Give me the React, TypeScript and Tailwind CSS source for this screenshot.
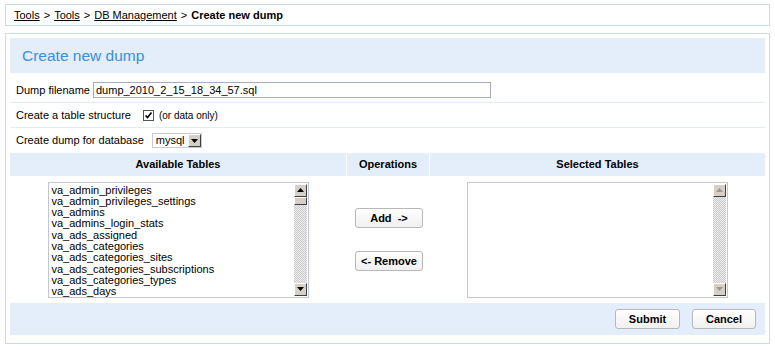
const tables = [
  'va_admin_privileges',
  'va_admin_privileges_settings',
  'va_admins',
  'va_admins_login_stats',
  'va_ads_assigned',
  'va_ads_categories',
  'va_ads_categories_sites',
  'va_ads_categories_subscriptions',
  'va_ads_categories_types',
  'va_ads_days',
];

const Arrow = ({ up, disabled }: { up?: boolean; disabled?: boolean }) => (
  <div className="w-[13px] h-[13px] bg-[#d4d0c8] border border-t-white border-l-white border-r-[#404040] border-b-[#404040] flex items-center justify-center">
    <svg width="7" height="4" viewBox="0 0 7 4">
      <path d={up ? 'M3.5 0 L7 4 L0 4 Z' : 'M0 0 L7 0 L3.5 4 Z'} fill={disabled ? '#9a9a9a' : '#000'} />
    </svg>
  </div>
);

const Scrollbar = ({ thumb }: { thumb?: boolean }) => (
  <div className="w-[13px] h-full flex flex-col">
    <Arrow up disabled={!thumb} />
    <div className="flex-1 flex flex-col bg-[repeating-conic-gradient(#c8c8c8_0_25%,#f0f0f0_0_50%)] bg-[length:2px_2px]">
      {thumb && (
        <div className="w-[13px] h-[8px] bg-[#d4d0c8] border border-t-white border-l-white border-r-[#404040] border-b-[#404040]" />
      )}
    </div>
    <Arrow disabled={!thumb} />
  </div>
);

const Btn = ({ children, className }: { children: React.ReactNode; className: string }) => (
  <button className={`h-[20px] rounded-[3px] border border-[#b8b8b8] bg-gradient-to-b from-white to-[#f0f0f0] text-[11px] font-bold text-black leading-none ${className}`}>
    {children}
  </button>
);

export default function App() {
  return (
    <div className="w-[775px] h-[350px] bg-white pt-[4px] px-[5px] text-[11px] text-black font-['Liberation_Sans',Arial,sans-serif]">
      <div className="w-[765px] h-[22px] border border-[#c6dde9] flex items-center pl-[8px] gap-[4px]">
        <a className="underline">Tools</a>
        <span>&gt;</span>
        <a className="underline">Tools</a>
        <span>&gt;</span>
        <a className="underline">DB Management</a>
        <span>&gt;</span>
        <span className="font-bold">Create new dump</span>
      </div>

      <div className="mt-[7px] w-[765px] h-[311px] border border-[#c6dde9] px-[4px] pt-[4px] pb-[7px] flex flex-col">
        <div className="h-[35px] bg-[#e3eefa] flex items-center pl-[12px] text-[15.5px] text-[#3a8de0]">
          Create new dump
        </div>

        <div className="mt-[5px] h-[25px] border-b border-[#e3ebf3] flex items-center pl-[6px]">
          <span className="mr-[3px]">Dump filename</span>
          <div className="w-[398px] h-[16px] border border-[#a5acc3] flex items-center pl-[2px] text-[11px]">
            dump_2010_2_15_18_34_57.sql
          </div>
        </div>

        <div className="h-[25px] border-b border-[#e3ebf3] flex items-center pl-[6px]">
          <span className="mr-[12px]">Create a table structure</span>
          <div className="w-[11px] h-[11px] border border-[#555] bg-white flex items-center justify-center">
            <svg width="9" height="9" viewBox="0 0 9 9">
              <path d="M1.5 4.5 L3.5 6.5 L7.5 1.5" stroke="#000" strokeWidth="1.6" fill="none" />
            </svg>
          </div>
          <span className="ml-[5px] text-[10px]">(or data only)</span>
        </div>

        <div className="h-[25px] flex items-center pl-[6px]">
          <span className="mr-[8px]">Create dump for database</span>
          <div className="w-[50px] h-[15px] border border-[#c8c8d8] flex items-center justify-between pl-[3px]">
            <span>mysql</span>
            <Arrow />
          </div>
        </div>

        <div className="h-[23px] grid grid-cols-[336px_82px_1fr] gap-x-px bg-white font-bold">
          <div className="bg-[#e3eefa] flex items-center justify-center">Available Tables</div>
          <div className="bg-[#e3eefa] flex items-center justify-center">Operations</div>
          <div className="bg-[#e3eefa] flex items-center justify-center">Selected Tables</div>
        </div>

        <div className="h-[127px] grid grid-cols-[336px_82px_1fr] gap-x-px">
          <div className="flex items-center justify-center">
            <div className="w-[261px] h-[116px] border border-[#c2c6d8] flex pl-[3px] pt-[1px] pr-[1px] pb-[1px]">
              <div className="flex-1 flex flex-col pt-[1px] leading-[11.3px]">
                {tables.map((t) => (
                  <span key={t}>{t}</span>
                ))}
              </div>
              <Scrollbar thumb />
            </div>
          </div>
          <div className="flex flex-col items-center justify-center gap-[23px] pl-[2px]">
            <Btn className="w-[68px]">Add &nbsp;-&gt;</Btn>
            <Btn className="w-[68px]">&lt;- Remove</Btn>
          </div>
          <div className="flex items-center justify-center">
            <div className="w-[261px] h-[116px] border border-[#c2c6d8] flex justify-end p-[1px]">
              <Scrollbar />
            </div>
          </div>
        </div>

        <div className="h-[32px] bg-[#e3eefa] flex items-center justify-end gap-[12px] pr-[9px]">
          <Btn className="w-[65px] h-[18px]">Submit</Btn>
          <Btn className="w-[64px] h-[18px]">Cancel</Btn>
        </div>
      </div>
    </div>
  );
}
